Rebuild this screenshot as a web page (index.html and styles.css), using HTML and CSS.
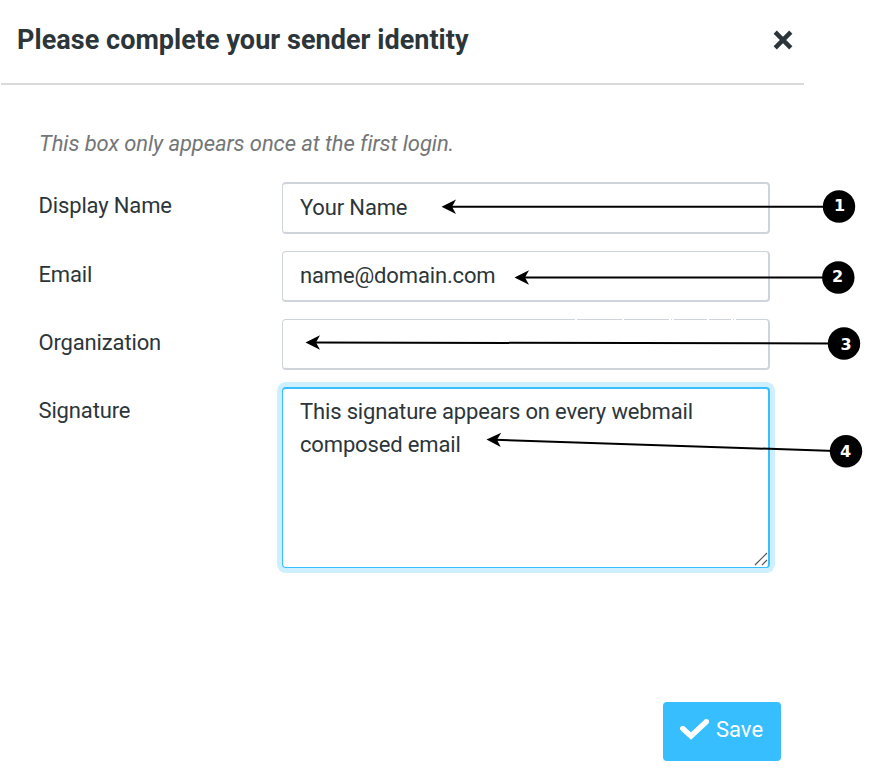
FILE: index.html
```html
<!DOCTYPE html>
<html lang="en">
<head>
  <meta charset="UTF-8" />
  <meta name="viewport" content="width=device-width, initial-scale=1" />
  <title>Sender identity</title>
  <link rel="stylesheet" href="styles.css">
</head>
<body>

<div class="dialog">
  <header class="dialog-header">
    <h1>Please complete your sender identity</h1>
    <button class="close" type="button" aria-label="Close">
      <svg width="20" height="20" viewBox="0 0 20 20"><path d="M2.2 2.2L17.8 17.8M17.8 2.2L2.2 17.8" /></svg>
    </button>
  </header>

  <form class="identity-form">
    <p class="hint">This box only appears once at the first login.</p>

    <div class="row">
      <label for="name">Display Name</label>
      <input class="field field-name" id="name" type="text" value="Your Name" />
    </div>
    <div class="row">
      <label for="email">Email</label>
      <input class="field" id="email" type="text" value="name@domain.com" />
    </div>
    <div class="row">
      <label for="organization">Organization</label>
      <input class="field" id="organization" type="text" />
    </div>
    <div class="row">
      <label for="signature">Signature</label>
      <div class="signature-box">
        <textarea class="field signature" id="signature" spellcheck="false">This signature appears on every webmail composed email</textarea>
        <svg class="grip" width="14" height="14" viewBox="0 0 14 14"><path d="M1 13L13 1M8 13L13 8" /></svg>
      </div>
    </div>
  </form>

  <footer class="dialog-footer">
    <button class="save" type="button">
      <svg width="29" height="21" viewBox="0 0 29 21"><path d="M2.7 9.5L11 17L26.3 2.7" /></svg>
      <span>Save</span>
    </button>
  </footer>
</div>

<!-- Numbered callouts over the form -->
<svg class="callouts" width="886" height="771" viewBox="0 0 886 771">
  <path class="gap" d="M575 319.5h2M622 319.5h2M669 319.5h2M672 319.5h2M707 319.5h2M731 319.5h2M734 319.5h2" />

  <path class="line" d="M450 206.8H830" />
  <path d="M441.5 206.8L456 199.5L452 206.8L456 214Z" />
  <circle cx="839" cy="206.5" r="16.2" />
  <text x="839.5" y="211">1</text>

  <path class="line" d="M522 277.5H830" />
  <path d="M514.5 277.5L529 270.3L525 277.5L529 284.7Z" />
  <circle cx="838.3" cy="277.5" r="16.2" />
  <text x="837.5" y="282">2</text>

  <path class="line" d="M314 342.5L835 343.5" />
  <path d="M305.5 342.5L320 335.3L316 342.5L320 349.7Z" />
  <circle cx="844" cy="343.5" r="16.2" />
  <text x="846" y="349.5">3</text>

  <path class="line" d="M495 439.7L835 451" />
  <path d="M486.5 439.4L501.2 432.7L497 439.8L500.7 447Z" />
  <circle cx="846" cy="451.2" r="16.2" />
  <text x="845.5" y="457">4</text>
</svg>

</body>
</html>
```

FILE: styles.css
```css
body {
  font-family: Roboto, sans-serif;
  font-size: 22px;
  letter-spacing: -0.15px;
  background-color: #fff;
  color: #2c363a;
  margin: 0;
  padding: 0;
}

.dialog {
  width: 803px;
  height: 771px;
  margin-left: 1px;
  display: flex;
  flex-direction: column;
}

.dialog-header {
  display: flex;
  align-items: center;
  justify-content: space-between;
  box-sizing: border-box;
  height: 85px;
  padding: 0 11px 3px 16px;
  border-bottom: 2px solid #dadada;
}

h1 {
  font-size: 27px;
  font-weight: bold;
  letter-spacing: 0.04px;
  margin: 0;
}

.close {
  display: flex;
  padding: 0;
  border: none;
  background: none;
  cursor: pointer;
}

.close path {
  fill: none;
  stroke: #2c363a;
  stroke-width: 4.5;
}

.identity-form {
  flex: 1;
  display: flex;
  flex-direction: column;
  gap: 17px;
  padding: 44px 34px 0 38px;
}

.hint {
  color: #737677;
  font-style: italic;
  letter-spacing: -0.09px;
  line-height: 30px;
  margin: 0 0 6px;
}

.row {
  display: grid;
  grid-template-columns: 243px 488px;
  align-items: start;
}

label {
  line-height: 30px;
  padding-top: 9px;
  margin-left: -0.5px;
}

.field {
  box-sizing: border-box;
  width: 488px;
  height: 51px;
  margin: 0;
  padding: 0 17px 2px;
  border: 1px solid #ced4da;
  border-width: 1px 2px 2px 1px;
  border-radius: 4px;
  background-color: #fff;
  color: #2c363a;
  font: inherit;
  letter-spacing: inherit;
  outline: none;
}

.field-name {
  height: 52px;
  border-top-width: 2px;
}

.signature-box {
  position: relative;
  height: 181px;
}

.signature {
  display: block;
  height: 181px;
  padding: 6px 17px;
  line-height: 33px;
  border-color: #37beff;
  border-width: 2px 2px 1px 1px;
  box-shadow: 0 0 0 5px #cdefff;
  resize: none;
}

.grip {
  position: absolute;
  right: 2px;
  bottom: 2px;
}

.grip path {
  fill: none;
  stroke: #555;
  stroke-width: 1.2;
}

.dialog-footer {
  display: flex;
  justify-content: flex-end;
  padding: 0 23px 10px 0;
}

.save {
  display: flex;
  align-items: center;
  gap: 7px;
  width: 118px;
  height: 59px;
  padding: 0 0 4px 17px;
  border: none;
  border-radius: 4px;
  background-color: #37beff;
  color: #fff;
  font: inherit;
  cursor: pointer;
}

.save path {
  fill: none;
  stroke: #fff;
  stroke-width: 5.4;
  stroke-linecap: round;
}

.callouts {
  position: absolute;
  top: 0;
  left: 0;
  letter-spacing: 0;
  pointer-events: none;
}

.callouts .line {
  stroke: #000;
  stroke-width: 2;
}

.callouts .gap {
  stroke: #fff;
}

.callouts text {
  fill: #fff;
  font-family: "DejaVu Sans", sans-serif;
  font-size: 16px;
  font-weight: bold;
  text-anchor: middle;
}
```
